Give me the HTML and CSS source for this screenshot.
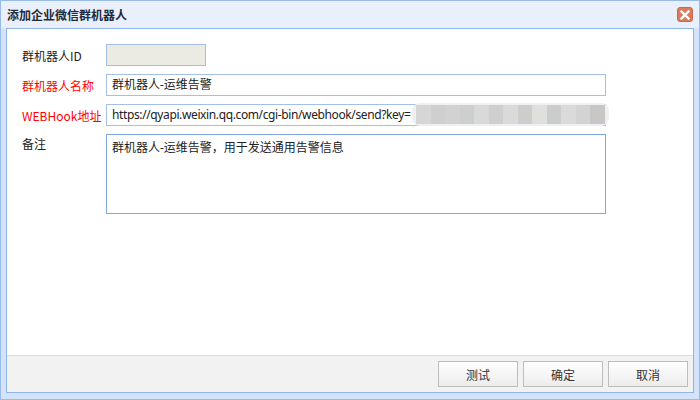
FILE: index.html
```html
<!DOCTYPE html>
<html>
<head>
<meta charset="utf-8">
<link rel="stylesheet" href="styles.css">
</head>
<body>
<div class="window">
  <div class="header">
    <span class="title">添加企业微信群机器人</span>
    <span class="close"><svg width="10" height="10" viewBox="0 0 10 10"><path d="M1.5 1.5 L8.5 8.5 M8.5 1.5 L1.5 8.5" stroke="#fff" stroke-width="2.4" stroke-linecap="square"/></svg></span>
  </div>
  <div class="panel">
    <div class="body">
      <div class="row">
        <label class="label">群机器人ID</label>
        <div class="input short disabled"></div>
      </div>
      <div class="row">
        <label class="label req">群机器人名称</label>
        <div class="input">群机器人-运维告警</div>
      </div>
      <div class="row">
        <label class="label req">WEBHook地址</label>
        <div class="input url">https://qyapi.weixin.qq.com/cgi-bin/webhook/send?key=
          <div class="blur">
            <i style="background:#d6d6d6"></i><i style="background:#cfcfcf"></i><i style="background:#d3d2d2"></i><i style="background:#cdcfcf"></i><i style="background:#d8d9d8"></i><i style="background:#cfcfcf"></i><i style="background:#dadada"></i><i style="background:#cdcecc"></i><i style="background:#dfdfde"></i><i style="background:#cbcdcd"></i><i style="background:#dadadb"></i><i style="background:#d3d3d4"></i><i style="background:#c9c6c6"></i>
          </div>
        </div>
      </div>
      <div class="row top">
        <label class="label">备注</label>
        <div class="input area">群机器人-运维告警，用于发送通用告警信息</div>
      </div>
    </div>
    <div class="footer">
      <button class="btn">测试</button>
      <button class="btn">确定</button>
      <button class="btn">取消</button>
    </div>
  </div>
</div>
</body>
</html>
```

FILE: styles.css
```css
* { box-sizing: border-box; }
html, body { margin: 0; padding: 0; }
body {
  width: 700px;
  height: 400px;
  font-family: "Noto Sans", "Noto Sans CJK SC", sans-serif;
  font-size: 12px;
  color: #222;
}
.window {
  width: 700px;
  height: 400px;
  border: 1px solid #99bbe8;
  background: #d5e3f8;
  padding: 0 5px 6px 5px;
  display: flex;
  flex-direction: column;
}
.header {
  height: 27px;
  margin: 0 -5px;
  padding: 0 6px 0 6px;
  background: #e9f0fb;
  display: flex;
  align-items: center;
  justify-content: space-between;
}
.title {
  font-family: "Noto Sans CJK SC", sans-serif;
  font-weight: bold;
  font-size: 12px;
  color: #1f2a3a;
}
.close {
  width: 16px;
  height: 15px;
  border-radius: 3px;
  background: #db7a5c;
  border: 1px solid #c8694c;
  display: flex;
  align-items: center;
  justify-content: center;
}
.panel {
  flex: 1;
  border: 1px solid #8fb4ea;
  background: #fff;
  display: flex;
  flex-direction: column;
}
.body {
  flex: 1;
  padding: 15px 0 0 15px;
  display: flex;
  flex-direction: column;
  gap: 8px;
}
.row {
  display: flex;
  align-items: center;
}
.row.top { align-items: flex-start; }
.row.top .label { padding-top: 1px; }
.label {
  width: 84px;
  font-family: "Noto Sans CJK SC", sans-serif;
  color: #222;
}
.label.req { color: #ff0000; }
.input {
  position: relative;
  width: 500px;
  height: 22px;
  border: 1px solid #a4c0e8;
  padding: 0 5px;
  line-height: 20px;
  font-family: "Noto Sans", "Noto Sans CJK SC", sans-serif;
  color: #222;
  white-space: nowrap;
}
.input.url { letter-spacing: -0.38px; }
.input.short { width: 100px; }
.input.disabled { background: #ebebe4; }
.input.area {
  height: 80px;
  border-color: #7fa6dd;
  padding-top: 3px;
}
.blur {
  position: absolute;
  left: 305px;
  top: -2px;
  width: 197px;
  height: 23px;
  display: flex;
  padding: 2px 4px;
  background: #eef0f3;
  border-radius: 8px;
  filter: blur(0.6px);
}
.blur i {
  flex: 1;
  display: block;
}
.footer {
  height: 37px;
  border-top: 1px solid #dadada;
  background: #f2f2f2;
  display: flex;
  justify-content: flex-end;
  align-items: center;
  gap: 5px;
  padding-right: 5px;
}
.btn {
  width: 80px;
  height: 26px;
  border: 1px solid #bdbdbd;
  background: linear-gradient(#ffffff, #ececec);
  font-family: "Noto Sans CJK SC", sans-serif;
  font-size: 12px;
  color: #333;
  padding: 0;
}
```
